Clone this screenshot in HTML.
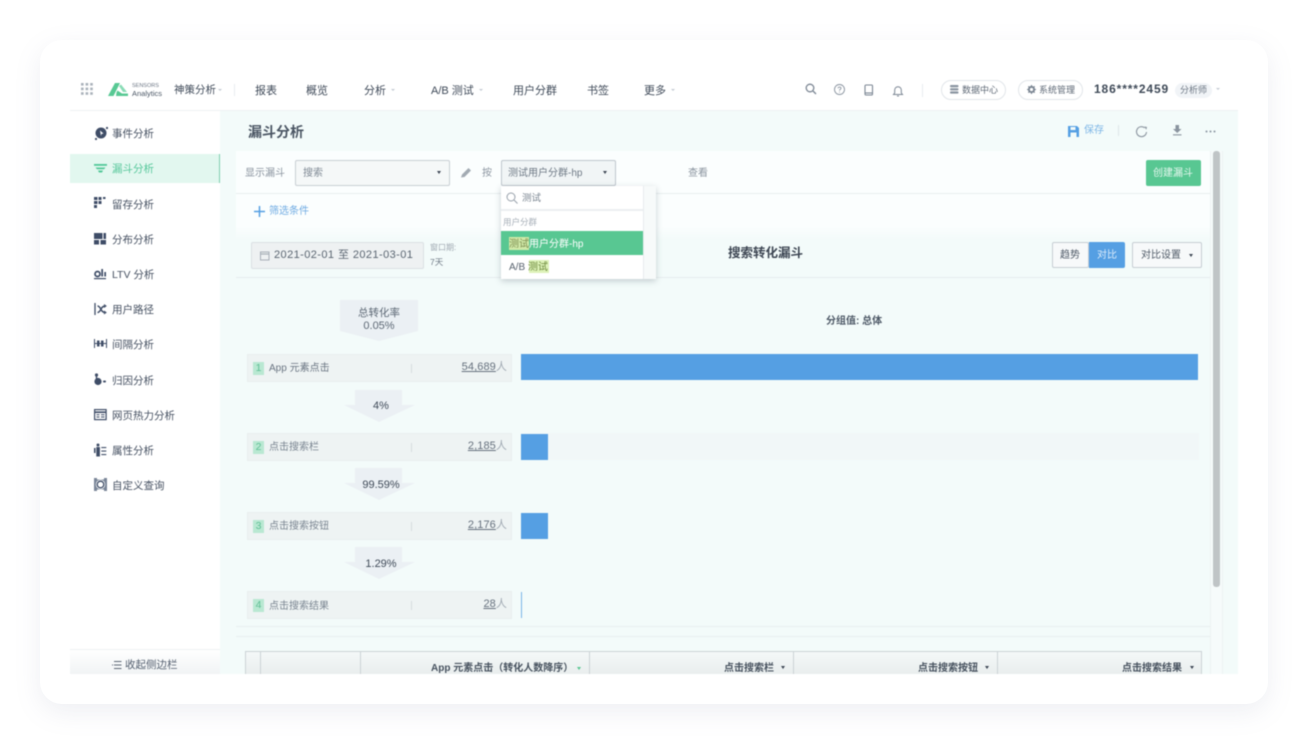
<!DOCTYPE html>
<html lang="zh">
<head>
<meta charset="utf-8">
<title>漏斗分析</title>
<style>
*{box-sizing:border-box;margin:0;padding:0}
html,body{width:1308px;height:744px;overflow:hidden;background:#fff;font-family:"Liberation Sans","Noto Sans CJK SC",sans-serif;color:#475669}
.a{position:absolute;white-space:nowrap}
#card{position:absolute;left:40px;top:40px;width:1228px;height:664px;background:#fff;border-radius:22px;box-shadow:0 8px 26px rgba(120,135,160,.13)}
#shot{position:absolute;left:70px;top:70px;width:1168px;height:604px;overflow:hidden;background:#fff;filter:blur(.5px)}
.t{position:absolute;white-space:nowrap;line-height:16px}
.nav{font-size:11px;color:#3f4a59;top:13px}
.side{font-size:10.5px;color:#465162;left:42px;line-height:14px}
.tri{position:absolute;width:0;height:0;border-left:2.5px solid transparent;border-right:2.5px solid transparent;border-top:3px solid #3d4654}
.tril{position:absolute;width:0;height:0;border-left:2.5px solid transparent;border-right:2.5px solid transparent;border-top:2px solid #c3cad2}
.step{position:absolute;left:177px;width:265px;height:28px;background:#eef3f3;border:1px solid #e9eeee}
.num{position:absolute;left:5px;top:7px;width:11px;height:13px;background:#b9e8d2;color:#5fbf95;font-size:10.5px;line-height:13px;text-align:center}
.nm{position:absolute;left:21px;top:7px;font-size:10px;line-height:14px;color:#7a8591;white-space:nowrap}
.sep{position:absolute;left:163px;top:9px;width:1px;height:9px;background:#d6dcdf}
.val{position:absolute;right:4px;top:5px;font-size:11px;line-height:14px;color:#66717e;white-space:nowrap;letter-spacing:.1px}
.val u{text-underline-offset:1px}
.bar{position:absolute;left:451px;background:#559fe3}
.btn{position:absolute;border:1px solid #c6cdd3;border-radius:2px;background:#f8fbfb}
svg{position:absolute;overflow:visible}
</style>
</head>
<body>
<div id="card"></div>
<div id="shot">
  <!-- header -->
  <div class="a" style="left:0;top:0;width:1168px;height:41px;background:#fff;border-bottom:1px solid #eef2f3"></div>
  <svg style="left:11px;top:13px" width="12" height="12" fill="#a9b1ba">
    <rect x="0" y="0" width="2.600" height="2.600"/><rect x="4.600" y="0" width="2.600" height="2.600"/><rect x="9.200" y="0" width="2.600" height="2.600"/>
    <rect x="0" y="4.600" width="2.600" height="2.600"/><rect x="4.600" y="4.600" width="2.600" height="2.600"/><rect x="9.200" y="4.600" width="2.600" height="2.600"/>
    <rect x="0" y="9.200" width="2.600" height="2.600"/><rect x="4.600" y="9.200" width="2.600" height="2.600"/><rect x="9.200" y="9.200" width="2.600" height="2.600"/>
  </svg>
  <svg style="left:38px;top:13px" width="20" height="14">
    <path d="M0 13L7 0H12L5.500 13Z" fill="#58c994"/>
    <path d="M11 3L13 1.500L19 9H15Z" fill="#8adcb6"/>
    <path d="M8.500 9.500L9.500 7.500L14 10.500H20L20 13H8Z" fill="#58c994"/>
  </svg>
  <div class="t" style="left:62px;top:13px;font-size:5.500px;line-height:7px;color:#6d7785">SENSORS</div>
  <div class="t" style="left:62px;top:19px;font-size:7.500px;line-height:9px;color:#4c5866">Analytics</div>
  <div class="t nav" style="left:104px;top:12px;font-size:10.500px">神策分析</div>
  <div class="tril" style="left:148px;top:19px"></div>
  <div class="a" style="left:164px;top:14px;width:1px;height:12px;background:#e8ecef"></div>
  <div class="t nav" style="left:185px">报表</div>
  <div class="t nav" style="left:236px">概览</div>
  <div class="t nav" style="left:294px">分析</div>
  <div class="tril" style="left:321px;top:19px"></div>
  <div class="t nav" style="left:361px">A/B 测试</div>
  <div class="tril" style="left:409px;top:19px"></div>
  <div class="t nav" style="left:443px">用户分群</div>
  <div class="t nav" style="left:517px">书签</div>
  <div class="t nav" style="left:574px">更多</div>
  <div class="tril" style="left:601px;top:19px"></div>

  <svg style="left:735px;top:13px" width="12" height="12" fill="none" stroke="#7c8794" stroke-width="1.300"><circle cx="5" cy="5" r="3.800"/><path d="M8 8L11 11"/></svg>
  <svg style="left:764px;top:14px" width="11" height="11" fill="none" stroke="#8a94a0" stroke-width=".9"><circle cx="5.500" cy="5.500" r="5"/><path d="M4 4.300C4 2.600 7 2.600 7 4.300C7 5.400 5.500 5.400 5.500 6.600M5.500 7.700V8.500"/></svg>
  <svg style="left:794px;top:14px" width="10" height="12" fill="none" stroke="#7c8794" stroke-width="1.100"><rect x="1" y="1" width="7.500" height="10" rx="1"/><path d="M1 9H8.500"/></svg>
  <svg style="left:822px;top:15px" width="12" height="12" fill="none" stroke="#7c8794" stroke-width="1"><path d="M1.500 9.500H10.500L9.300 8V5A3.300 3.300 0 0 0 2.700 5V8ZM5 11H7"/></svg>
  <div class="a" style="left:852px;top:14px;width:1px;height:13px;background:#e8ecef"></div>

  <div class="a" style="left:871px;top:10px;width:65px;height:20px;border:1px solid #e2e6ea;border-radius:10px;background:#fff"></div>
  <svg style="left:880px;top:15px" width="10" height="9" fill="#8a94a0"><rect x="0" y="0" width="8.500" height="2.200" rx="1"/><rect x="0" y="3.200" width="8.500" height="2.200" rx="1"/><rect x="0" y="6.400" width="8.500" height="2.200" rx="1"/></svg>
  <div class="t" style="left:892px;top:12px;font-size:9px;color:#5e6976">数据中心</div>
  <div class="a" style="left:948px;top:10px;width:65px;height:20px;border:1px solid #e2e6ea;border-radius:10px;background:#fff"></div>
  <svg style="left:957px;top:15px" width="10" height="10" fill="none" stroke="#7c8794"><circle cx="4.500" cy="4.500" r="2.600" stroke-width="2"/><path d="M4.500 0V1.500M4.500 7.500V9M0 4.500H1.500M7.500 4.500H9M1.300 1.300L2.300 2.300M6.700 6.700L7.700 7.700M7.700 1.300L6.700 2.300M1.300 7.700L2.300 6.700" stroke-width="1.100"/></svg>
  <div class="t" style="left:969px;top:12px;font-size:9px;color:#5e6976">系统管理</div>
  <div class="t" style="left:1024px;top:11px;font-size:12px;font-weight:bold;color:#3f4a58;letter-spacing:.88px">186****2459</div>
  <div class="a" style="left:1105px;top:13px;width:37px;height:15px;background:#f1f4f7;border-radius:8px"></div>
  <div class="t" style="left:1110px;top:12px;font-size:9px;color:#6c7683">分析师</div>
  <div class="tril" style="left:1146px;top:18px"></div>

  <!-- sidebar -->
  <div class="a" style="left:0;top:41px;width:150px;height:563px;background:#fff"></div>
  <div class="a" style="left:0;top:84px;width:150px;height:29px;background:#e2f7ef;border-right:1px solid #7fcfae"></div>

  <svg style="left:24px;top:55px" width="15" height="17"><circle cx="7" cy="8" r="5.500" fill="#3f4d67"/><path d="M6 5.500L9.500 8.500L7.500 9L7 11Z" fill="#fff"/><circle cx="13" cy="3" r="1.100" fill="#3f4d67"/><circle cx="2" cy="14" r="1.100" fill="#3f4d67"/></svg>
  <div class="t side" style="top:57px">事件分析</div>

  <svg style="left:24px;top:93px" width="14" height="11" fill="#52c898"><rect x="0" y="1" width="13" height="1.800"/><path d="M1.500 4.500H11.500L10 6.200H3Z"/><path d="M4 7.500H9L8 9.500H5Z"/></svg>
  <div class="t side" style="top:92px;color:#55c79a">漏斗分析</div>

  <svg style="left:24px;top:127px" width="14" height="14" fill="#3f4d67"><rect width="3.500" height="3" x="0" y="0"/><rect width="3" height="3" x="4.500" y="0"/><rect width="2.500" height="2" x="9" y="0"/><rect width="3.500" height="3" x="0" y="4"/><rect width="3" height="3" x="4.500" y="4"/><rect width="3" height="3" x="0" y="8"/></svg>
  <div class="t side" style="top:128px">留存分析</div>

  <svg style="left:24px;top:163px" width="13" height="13" fill="#3f4d67"><rect width="8.500" height="6" x="0" y="0"/><rect width="2.500" height="6" x="9.500" y="0"/><rect width="5" height="4.500" x="0" y="7"/><rect width="5.500" height="4.500" x="6.500" y="7"/></svg>
  <div class="t side" style="top:163px">分布分析</div>

  <svg style="left:24px;top:198px" width="14" height="13"><circle cx="3.500" cy="6" r="2.500" fill="none" stroke="#3f4d67" stroke-width="1.700"/><rect x="7.300" y="1" width="1.700" height="7.500" fill="#3f4d67"/><rect x="10.300" y="4" width="1.700" height="4.500" fill="#3f4d67"/><rect x="0" y="10" width="12" height="1.200" fill="#3f4d67"/></svg>
  <div class="t side" style="top:198px">LTV 分析</div>

  <svg style="left:24px;top:233px" width="14" height="13" fill="none" stroke="#3f4d67" stroke-width="1.300"><path d="M1 0V12"/><path d="M3.500 3C7 3 6.500 9.500 11 9.500M3.500 9.500C7 9.500 6.500 3 11 3" stroke-width="1.500"/><path d="M10 1.500L12 3L10 4.500M10 8L12 9.500L10 11" stroke-width="1"/></svg>
  <div class="t side" style="top:233px">用户路径</div>

  <svg style="left:24px;top:269px" width="14" height="10" fill="#3f4d67"><rect x="0" y="0" width="1" height="9"/><rect x="12" y="0" width="1" height="9"/><rect x="1" y="4" width="11" height="1"/><rect x="3" y="1.500" width="2.500" height="6"/><rect x="7" y="1.500" width="2.500" height="6"/></svg>
  <div class="t side" style="top:268px">间隔分析</div>

  <svg style="left:24px;top:303px" width="14" height="14" fill="#3f4d67"><circle cx="2.500" cy="2" r="1.600"/><rect x="1.800" y="2" width="1.400" height="5"/><circle cx="4" cy="8.500" r="3.600"/><rect x="9" y="7.500" width="3" height="2" rx="1"/></svg>
  <div class="t side" style="top:304px">归因分析</div>

  <svg style="left:24px;top:339px" width="13" height="12" fill="none" stroke="#3f4d67"><rect x=".6" y=".6" width="11.500" height="10" stroke-width="1.200"/><path d="M.6 3.200H12" stroke-width="1.600"/><path d="M2.500 5.700H5.500M7 5.700H10.500M2.500 8H5.500M7 8H10.500" stroke-width="1"/></svg>
  <div class="t side" style="top:339px">网页热力分析</div>

  <svg style="left:24px;top:373px" width="14" height="15" fill="#3f4d67"><circle cx="4" cy="2" r="1.500"/><rect x="2.300" y="4" width="3.600" height="9.500"/><rect x="0" y="5" width="1.500" height="5"/><rect x="7.300" y="4" width="5" height="1.100"/><rect x="7.300" y="7.500" width="5" height="1.100"/><rect x="7.300" y="11" width="5" height="1.100"/></svg>
  <div class="t side" style="top:374px">属性分析</div>

  <svg style="left:24px;top:408px" width="14" height="14"><rect x="0" y="0" width="13" height="13" fill="#7a8698"/><circle cx="6.500" cy="6.500" r="4.700" fill="#fff"/><circle cx="6.500" cy="6.500" r="3.300" fill="none" stroke="#3f4d67" stroke-width="1.300"/><rect x="3" y="0" width="7" height="1.500" fill="#fff"/><rect x="3" y="11.500" width="7" height="1.500" fill="#fff"/></svg>
  <div class="t side" style="top:409px">自定义查询</div>

  <div class="a" style="left:0;top:579px;width:150px;height:25px;background:linear-gradient(#fff,#f1f4f5);border-top:1px solid #eef1f3"></div>
  <svg style="left:42px;top:591px" width="10" height="8" stroke="#5c6775" stroke-width="1"><path d="M2 .5H9.500M2 4H9.500M2 7.500H9.500M0 4H1"/></svg>
  <div class="t" style="left:55px;top:588px;font-size:10.500px;line-height:14px;color:#556070">收起侧边栏</div>

  <!-- main -->
  <div class="a" style="left:150px;top:41px;width:1018px;height:563px;background:#f3fbfa"></div>
  <div class="t" style="left:178px;top:53px;font-size:14px;line-height:18px;font-weight:bold;color:#4a5563">漏斗分析</div>
  <svg style="left:998px;top:56px" width="11" height="11"><path d="M0 0H9L11 2V11H0Z" fill="#559fe3"/><rect x="2.500" y="1" width="5" height="3" fill="#f3fbfa"/><rect x="2.500" y="6.500" width="6" height="4.500" fill="#f3fbfa"/></svg>
  <div class="t" style="left:1014px;top:53px;font-size:10px;color:#7eb6e6">保存</div>
  <div class="a" style="left:1048px;top:55px;width:1px;height:11px;background:#dfe6e9"></div>
  <svg style="left:1066px;top:56px" width="12" height="12" fill="none" stroke="#8a949f" stroke-width="1.100"><path d="M10.500 6A5 5 0 1 1 8.700 1.800"/><path d="M8.300 .5L11 1L10.300 3.700Z" fill="#8a949f" stroke="none"/></svg>
  <svg style="left:1102px;top:55px" width="11" height="12" fill="#8a949f"><path d="M3.500 0H7V4H9.500L5.250 8L1 4H3.500Z"/><rect x="1" y="9.300" width="8.500" height="1.100"/></svg>
  <svg style="left:1135px;top:60px" width="12" height="3" fill="#8a949f"><circle cx="1.500" cy="1.500" r="1"/><circle cx="5.500" cy="1.500" r="1"/><circle cx="9.500" cy="1.500" r="1"/></svg>

  <div class="a" style="left:166px;top:81px;width:976px;height:43px;background:#fbfefe;border-bottom:1px solid #e8eeef"></div>
  <div class="a" style="left:166px;top:124px;width:976px;height:46px;background:linear-gradient(#fbfefe 70%,#f3fbfa)"></div>
  <div class="t" style="left:175px;top:96px;font-size:10px;color:#8b95a0">显示漏斗</div>
  <div class="btn" style="left:225px;top:90px;width:155px;height:26px;background:#f5f8f8;border-color:#c9cfd4"></div>
  <div class="t" style="left:233px;top:96px;font-size:10px;color:#7f8994">搜索</div>
  <div class="tri" style="left:367px;top:101px"></div>
  <svg style="left:391px;top:97px" width="11" height="11" fill="#a3abb3"><path d="M0 10.500L1 7.500L7.500 1L10 3.500L3.500 10Z"/></svg>
  <div class="t" style="left:412px;top:96px;font-size:10px;color:#8b95a0">按</div>
  <div class="btn" style="left:431px;top:90px;width:115px;height:26px;background:#f1f5f6;border-color:#bfc7cd"></div>
  <div class="t" style="left:438px;top:96px;font-size:10px;color:#6f7a86">测试用户分群-hp</div>
  <div class="tri" style="left:533px;top:101px"></div>
  <div class="t" style="left:618px;top:96px;font-size:10px;color:#8b95a0">查看</div>
  <div class="a" style="left:1076px;top:90px;width:55px;height:26px;background:#58c792;border-radius:2px"></div>
  <div class="t" style="left:1083px;top:96px;font-size:10px;color:#e6f7ef">创建漏斗</div>

  <svg style="left:184px;top:136px" width="11" height="11" stroke="#559fe3" stroke-width="1.500"><path d="M5.500 0V11M0 5.500H11"/></svg>
  <div class="t" style="left:199px;top:134px;font-size:10px;color:#6fabe3">筛选条件</div>

  <div class="a" style="left:166px;top:207px;width:976px;height:1px;background:#e6ecee"></div>
  <div class="a" style="left:181px;top:172px;width:173px;height:27px;background:#eef1f2;border:1px solid #dbe0e3;border-radius:2px"></div>
  <svg style="left:190px;top:181px" width="10" height="10" fill="none" stroke="#a7afb7"><rect x=".5" y="1" width="8.500" height="8"/><path d="M.5 3H9" stroke-width="1.200"/></svg>
  <div class="t" style="left:204px;top:177px;font-size:11px;color:#5a6571;letter-spacing:.42px">2021-02-01 至 2021-03-01</div>
  <div class="t" style="left:360px;top:172px;font-size:8px;line-height:12px;color:#a0a9b2">窗口期:</div>
  <div class="t" style="left:360px;top:186px;font-size:8.500px;line-height:12px;color:#6f7a86">7天</div>
  <div class="t" style="left:658px;top:175px;font-size:12.500px;line-height:17px;font-weight:bold;color:#3d4653">搜索转化漏斗</div>

  <div class="btn" style="left:982px;top:172px;width:37px;height:26px;background:#f7f9fa"></div>
  <div class="t" style="left:990px;top:178px;font-size:10px;color:#4f5a67">趋势</div>
  <div class="a" style="left:1019px;top:172px;width:36px;height:26px;background:#559fe3;border-radius:0 2px 2px 0"></div>
  <div class="t" style="left:1027px;top:178px;font-size:10px;color:#dcecfb">对比</div>
  <div class="btn" style="left:1062px;top:172px;width:70px;height:26px;background:#f7f9fa"></div>
  <div class="t" style="left:1071px;top:178px;font-size:10px;color:#4f5a67">对比设置</div>
  <div class="tri" style="left:1119px;top:184px"></div>

  <!-- funnel -->
  <svg style="left:270px;top:230px" width="80" height="42" fill="#ebf0f4"><path d="M0 0H78V31L39 41L0 31Z"/></svg>
  <div class="t" style="left:270px;top:237px;width:78px;text-align:center;font-size:10.500px;line-height:13px;color:#5d6875">总转化率<br><span style="font-size:11px">0.05%</span></div>
  <div class="t" style="left:756px;top:244px;font-size:10px;font-weight:bold;color:#4d5866">分组值: 总体</div>

  <div class="step" style="top:284px"><div class="num">1</div><div class="nm" style="color:#6a7582">App 元素点击</div><div class="sep"></div><div class="val"><u>54,689</u><span style="color:#a0a9b2">人</span></div></div>
  <div class="bar" style="top:284px;width:677px;height:26px"></div>

  <svg style="left:274px;top:320px" width="74" height="32" fill="#ebf0f4"><path d="M11 0H58V15H71L35 32L0 15H11Z"/></svg>
  <div class="t" style="left:270px;top:328px;width:82px;text-align:center;font-size:11px;color:#3f4a58">4%</div>

  <div class="a" style="left:451px;top:363px;width:678px;height:27px;background:#f1f7f8"></div>
  <div class="step" style="top:363px"><div class="num">2</div><div class="nm">点击搜索栏</div><div class="sep"></div><div class="val"><u>2,185</u><span style="color:#a0a9b2">人</span></div></div>
  <div class="bar" style="top:364px;width:27px;height:26px"></div>

  <svg style="left:274px;top:398px" width="74" height="32" fill="#ebf0f4"><path d="M11 0H58V15H71L35 32L0 15H11Z"/></svg>
  <div class="t" style="left:270px;top:407px;width:82px;text-align:center;font-size:11px;color:#3f4a58">99.59%</div>

  <div class="step" style="top:442px"><div class="num">3</div><div class="nm">点击搜索按钮</div><div class="sep"></div><div class="val"><u>2,176</u><span style="color:#a0a9b2">人</span></div></div>
  <div class="bar" style="top:443px;width:27px;height:26px"></div>

  <svg style="left:274px;top:477px" width="74" height="32" fill="#ebf0f4"><path d="M11 0H58V15H71L35 32L0 15H11Z"/></svg>
  <div class="t" style="left:270px;top:486px;width:82px;text-align:center;font-size:11px;color:#3f4a58">1.29%</div>

  <div class="step" style="top:521px"><div class="num">4</div><div class="nm" style="top:8px">点击搜索结果</div><div class="sep"></div><div class="val"><u>28</u><span style="color:#a0a9b2">人</span></div></div>
  <div class="bar" style="top:522px;width:1px;height:26px;background:#7ab4e8"></div>

  <div class="a" style="left:166px;top:556px;width:976px;height:1px;background:#e8efef"></div>
  <div class="a" style="left:166px;top:566px;width:976px;height:1px;background:#e8efef"></div>

  <!-- table header -->
  <div class="a" style="left:175px;top:581px;width:957px;height:23px;background:linear-gradient(#f4f8f8,#e9eeee);border:1px solid #ccd3d6;border-bottom:0"></div>
  <div class="a" style="left:190px;top:581px;width:1px;height:23px;background:#ccd3d6"></div>
  <div class="a" style="left:290px;top:581px;width:1px;height:23px;background:#ccd3d6"></div>
  <div class="a" style="left:519px;top:581px;width:1px;height:23px;background:#ccd3d6"></div>
  <div class="a" style="left:723px;top:581px;width:1px;height:23px;background:#ccd3d6"></div>
  <div class="a" style="left:927px;top:581px;width:1px;height:23px;background:#ccd3d6"></div>
  <div class="t" style="left:361px;top:592px;font-size:10px;line-height:14px;font-weight:bold;color:#47525f">App 元素点击（转化人数降序）</div>
  <div class="tri" style="left:507px;top:597px;border-top-color:#58c792"></div>
  <div class="t" style="left:654px;top:592px;font-size:10px;line-height:14px;color:#47525f;font-weight:bold">点击搜索栏</div>
  <div class="tri" style="left:711px;top:596px"></div>
  <div class="t" style="left:848px;top:592px;font-size:10px;line-height:14px;color:#47525f;font-weight:bold">点击搜索按钮</div>
  <div class="tri" style="left:915px;top:596px"></div>
  <div class="t" style="left:1052px;top:592px;font-size:10px;line-height:14px;color:#47525f;font-weight:bold">点击搜索结果</div>
  <div class="tri" style="left:1120px;top:596px"></div>

  <!-- scrollbar -->
  <div class="a" style="left:1140px;top:81px;width:13px;height:523px;background:#f6fbfb;border-left:1px solid #edf2f3;border-right:1px solid #edf2f3"></div>
  <div class="a" style="left:1143px;top:81px;width:7px;height:436px;background:#bfc4c6;border-radius:3px"></div>

  <!-- dropdown -->
  <div class="a" style="left:431px;top:116px;width:155px;height:93px;background:#fff;box-shadow:0 2px 6px rgba(70,85,100,.28)"></div>
  <div class="a" style="left:573px;top:116px;width:13px;height:93px;background:#f7fafa;border-left:1px solid #e8ecee"></div>
  <div class="a" style="left:431px;top:139px;width:142px;height:2px;background:#eceff1"></div>
  <svg style="left:436px;top:122px" width="12" height="12" fill="none" stroke="#98a1ab" stroke-width="1"><circle cx="5" cy="5" r="4"/><path d="M8 8L11.500 11.500"/></svg>
  <div class="t" style="left:452px;top:121px;font-size:9.500px;color:#78838f">测试</div>
  <div class="t" style="left:433px;top:144px;font-size:8.500px;color:#a7afb8">用户分群</div>
  <div class="a" style="left:431px;top:161px;width:142px;height:24px;background:#58c792"></div>
  <div class="a" style="left:439px;top:167px;width:20px;height:13px;background:#d0e9a8"></div>
  <div class="t" style="left:439px;top:167px;font-size:10px;color:#fff"><span style="color:#7f8f52">测试</span>用户分群-hp</div>
  <div class="a" style="left:459px;top:190px;width:20px;height:13px;background:#ddf2b8"></div>
  <div class="t" style="left:439px;top:190px;font-size:10px;color:#59636f">A/B <span style="color:#6f8a3f">测试</span></div>
</div>
</body>
</html>
